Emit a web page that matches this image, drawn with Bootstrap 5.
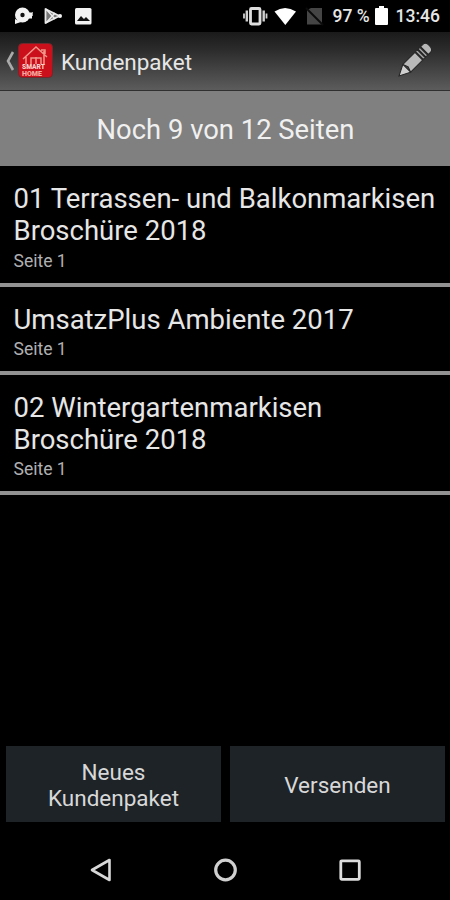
<!DOCTYPE html>
<html lang="de" data-bs-theme="dark">
<head>
<meta charset="utf-8">
<meta name="viewport" content="width=device-width, initial-scale=1">
<title>Kundenpaket</title>
<link href="https://cdn.jsdelivr.net/npm/bootstrap@5.3.0/dist/css/bootstrap.min.css" rel="stylesheet">
<style>
body{background:#000;color:#e6e6e6;font-family:Roboto,"Liberation Sans",sans-serif;overflow:hidden}
.screen{width:450px;height:900px;background:#000}
.statusbar{height:32px;padding:0 10px 0 12px;font-size:17.5px;font-weight:500;color:#e6e6e6}
.statusbar svg,.titlebar svg,.softkeys svg{display:block;flex:none}
.statusbar span{white-space:nowrap;padding-top:1px}
.statusbar .pct{margin:0 5px 0 7px}
.statusbar .clock{margin-left:8px}
.titlebar{height:58px;padding:0 18px 0 5px;background:linear-gradient(#1a1a1a,#2b2b2b 30%,#5c5c5c)}
.titlebar h1{font-size:22.5px;font-weight:400;line-height:26px;padding:1px 0 0 8px;color:#e6e6e6}
.quota{height:76px;border-top:1px solid #303030;background:#808080;font-size:27.4px;color:#f0f0f0;padding:4px 0 0 1px}
.list-group .entry{padding:17px 8px 10px 13.5px;background:#000;border:0;border-radius:0}
.list-group .entry,.list-group .entry:last-child{border-bottom:4px solid #929292}
.entry h2{font-size:27.5px;line-height:32.3px;font-weight:400;color:#e6e6e6}
.entry p{font-size:17.5px;line-height:24px;color:#b0b0b0;padding-top:1px}
.actions{padding:0 5px 0 6px;gap:9px;margin-bottom:18px}
.actions .btn{height:76px;background:#1e2328;border:0;border-radius:0;color:#d8d8d8;font-size:22.5px;line-height:26px;padding-top:8px}
.softkeys{height:60px;padding:0 88px 0 89px}
</style>
</head>
<body>
<div class="screen d-flex flex-column">
  <div class="statusbar d-flex align-items-center">
    <svg width="82" height="32" viewBox="0 0 82 32" fill="#f2f2f2">
      <circle cx="10.500" cy="15" r="7.500"/><path d="M3 19v5l6-2zM17 12.500h3v6h-3z"/><circle cx="10.500" cy="15" r="2.200" fill="#111"/><path d="M20.500 12v4" stroke="#aaa" stroke-width="1"/>
      <path d="M33.500 9v14l14-7z" fill="#777" stroke="#e8e8e8" stroke-width="1.800" stroke-linejoin="round"/><path d="M34 9l9 10M34 23l9-10" stroke="#eee" stroke-width="1.500"/><circle cx="48" cy="16" r="2"/>
      <rect x="63" y="8" width="16.500" height="16.500" rx="1.500"/><path d="M65 21l4-5 3 3 2-2 4 4z" fill="#111"/>
    </svg>
    <svg class="ms-auto" width="84" height="32" viewBox="0 0 84 32">
      <rect x="9.500" y="8.500" width="9.500" height="15.500" rx="1" fill="none" stroke="#dedede" stroke-width="2.800"/><path d="M5.800 10.500v11M22.700 10.500v11" stroke="#d0d0d0" stroke-width="2.400"/><path d="M3 13.500v5M25.500 13.500v5" stroke="#d0d0d0" stroke-width="1.800"/>
      <path d="M33.500 11.500Q44 4.500 55 11.500L44.300 25z" fill="#fff"/>
      <path d="M70 8h11v16.500H66V10z" fill="#454545"/><path d="M65 8l17 17" stroke="#0b0b0b" stroke-width="2"/>
    </svg>
    <span class="pct">97 %</span>
    <svg width="13" height="32" viewBox="0 0 13 32"><path d="M4 6h5v2h3a1 1 0 0 1 1 1v15a1 1 0 0 1-1 1H1a1 1 0 0 1-1-1V9a1 1 0 0 1 1-1h3z" fill="#fff"/></svg>
    <span class="clock">13:46</span>
  </div>
  <header class="titlebar d-flex align-items-center">
    <svg width="48" height="58" viewBox="0 0 48 58">
      <path d="M8 20L3 29l5 9" fill="none" stroke="#aaa" stroke-width="2.600"/>
      <rect x="13.500" y="11.500" width="34" height="34" rx="4" fill="#cb101b" stroke="#70292c" stroke-width="1"/>
      <path d="M18 27L31 15l11 10M21 25v7M39 19v13M36 18h4v4M26 32v-6h10v6M31 25v7" fill="none" stroke="#ee968a" stroke-width="1.500"/>
      <g fill="#ffd0ca" font-family="Roboto,sans-serif" font-weight="900" font-size="7"><text x="17" y="37" textLength="23" lengthAdjust="spacingAndGlyphs">SMART</text><text x="17" y="43.500" textLength="20" lengthAdjust="spacingAndGlyphs" fill="#f6aaa2">HOME</text></g>
    </svg>
    <h1 class="mb-0">Kundenpaket</h1>
    <svg class="ms-auto" width="36" height="58" viewBox="0 0 36 58">
      <g transform="translate(3 44) rotate(-45)" stroke="#252525" stroke-width="1">
        <path d="M0 0L11-5.500V5.500z" fill="#d0d0d0"/><path d="M11-5.500H28V5.500H11L13 0z" fill="#b9b9b9"/><path d="M29-5.500h2.500v11H29zM32.500-5.500H35v11h-2.500z" fill="#a5a5a5"/><path d="M36-5.500h3q4 0 4 5.500t-4 5.500h-3z" fill="#b8b8b8"/>
      </g>
    </svg>
  </header>
  <div class="quota d-flex align-items-center justify-content-center"><span>Noch 9 von 12 Seiten</span></div>
  <div class="list-group list-group-flush">
    <div class="list-group-item entry"><h2 class="mb-0">01 Terrassen- und Balkonmarkisen Broschüre 2018</h2><p class="mb-0">Seite 1</p></div>
    <div class="list-group-item entry"><h2 class="mb-0">UmsatzPlus Ambiente 2017</h2><p class="mb-0">Seite 1</p></div>
    <div class="list-group-item entry"><h2 class="mb-0">02 Wintergartenmarkisen<br>Broschüre 2018</h2><p class="mb-0">Seite 1</p></div>
  </div>
  <div class="actions d-flex mt-auto">
    <button class="btn flex-fill w-50" type="button">Neues<br>Kundenpaket</button>
    <button class="btn flex-fill w-50" type="button">Versenden</button>
  </div>
  <nav class="softkeys d-flex align-items-center justify-content-between">
    <svg width="24" height="24" viewBox="0 0 24 24"><path d="M3 12L20.500 2v20z" fill="none" stroke="#d8d8d8" stroke-width="2.600" stroke-linejoin="round"/></svg>
    <svg width="24" height="24" viewBox="0 0 24 24"><circle cx="11.500" cy="12" r="9.800" fill="none" stroke="#d0d0d0" stroke-width="3.200"/></svg>
    <svg width="24" height="24" viewBox="0 0 24 24"><rect x="2.800" y="2.800" width="18.500" height="18.500" rx="1" fill="none" stroke="#dcdcdc" stroke-width="2.800"/></svg>
  </nav>
</div>
<script src="https://cdn.jsdelivr.net/npm/bootstrap@5.3.0/dist/js/bootstrap.bundle.min.js"></script>
</body>
</html>
